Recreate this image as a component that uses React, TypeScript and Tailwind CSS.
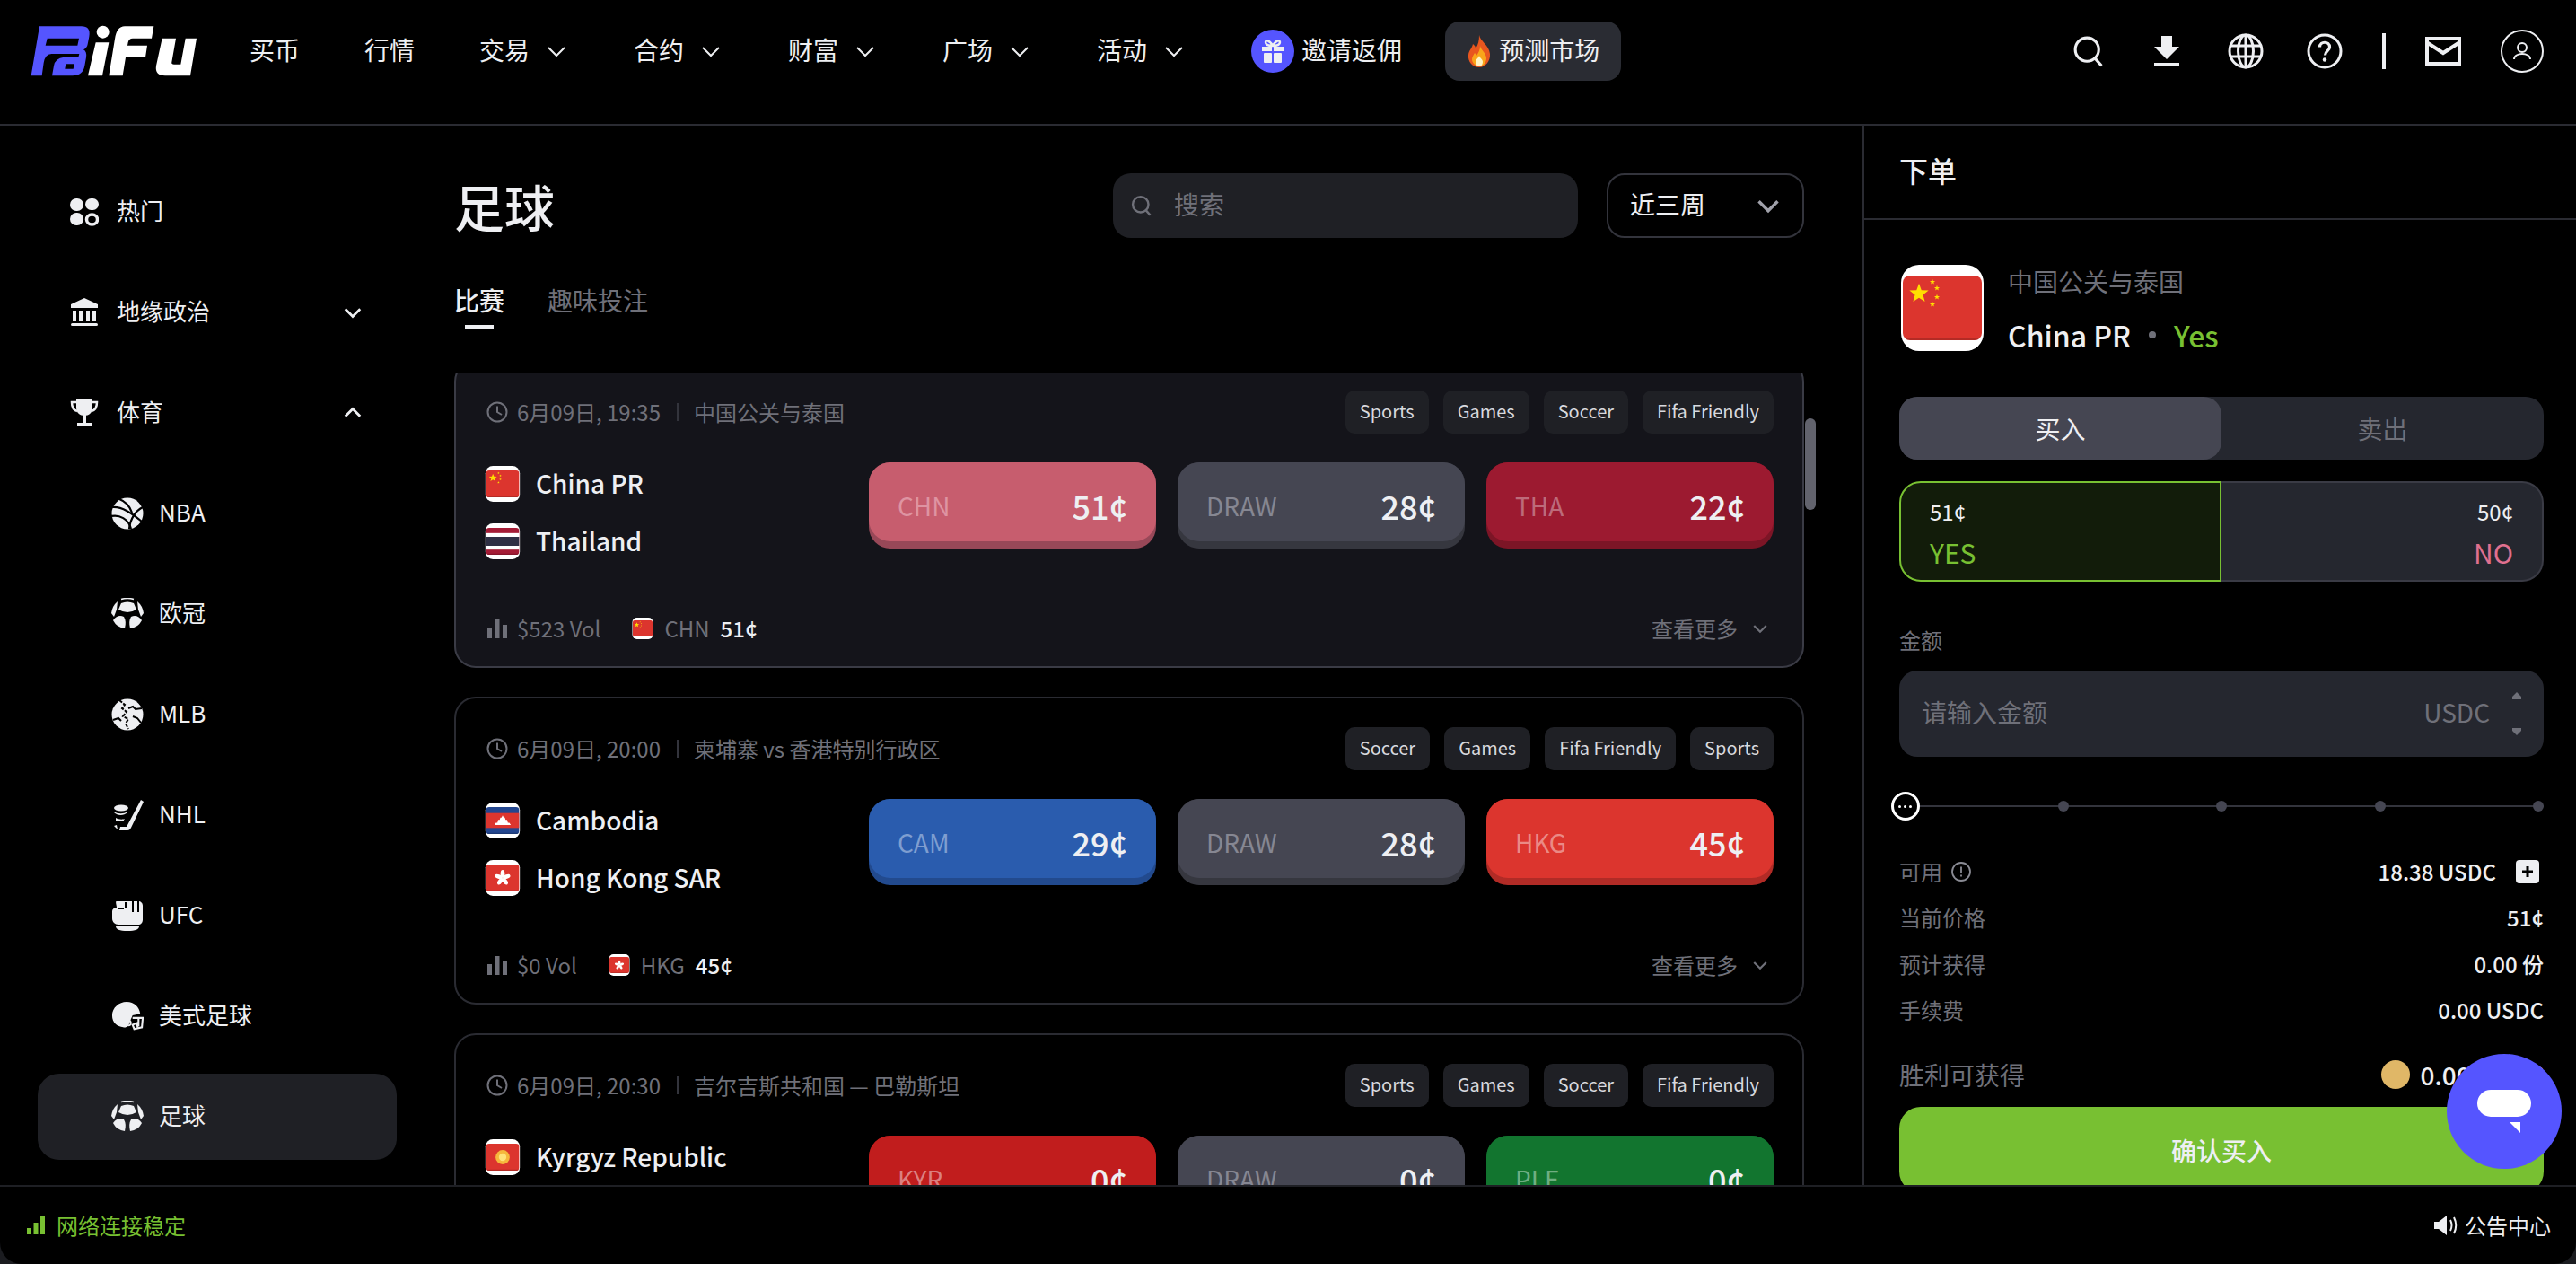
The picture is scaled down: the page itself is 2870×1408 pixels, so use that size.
import React from "react"

const INK = "#eeeff2"

type FlagCode = "cn" | "th" | "kh" | "hk" | "kg" | "pk"

function Star({ x, y, r, fill = "#ffde00" }: { x: number; y: number; r: number; fill?: string }) {
  const pts = []
  for (let i = 0; i < 10; i++) {
    const a = -Math.PI / 2 + (i * Math.PI) / 5
    const rad = i % 2 === 0 ? r : r * 0.42
    pts.push(`${x + rad * Math.cos(a)},${y + rad * Math.sin(a)}`)
  }
  return <polygon points={pts.join(" ")} fill={fill} />
}

function FlagBody({ code }: { code: FlagCode }) {
  if (code === "cn")
    return (
      <>
        <rect x="0" y="6" width="48" height="36" fill="#dc352e" />
        <Star x={11} y={16} r={5.6} />
        <Star x={18.5} y={9.5} r={1.6} />
        <Star x={21} y={13} r={1.6} />
        <Star x={21} y={18} r={1.6} />
        <Star x={18.5} y={22} r={1.6} />
      </>
    )
  if (code === "th")
    return (
      <>
        <rect x="0" y="6" width="48" height="36" fill="#a51c36" />
        <rect x="0" y="13" width="48" height="22" fill="#ffffff" />
        <rect x="0" y="18" width="48" height="12" fill="#2f3044" />
      </>
    )
  if (code === "kh")
    return (
      <>
        <rect x="0" y="6" width="48" height="36" fill="#23468f" />
        <rect x="0" y="14" width="48" height="20" fill="#dc352e" />
        <path d="M13 30h22l-2-3h-2l-1-4h-2l-1-3h-1.5L24 17l-1.500 3H21l-1 3h-2l-1 4h-2z" fill="#fff" />
      </>
    )
  if (code === "hk")
    return (
      <>
        <rect x="0" y="6" width="48" height="36" fill="#dc352e" />
        {[0, 72, 144, 216, 288].map((a) => (
          <ellipse key={a} cx="24" cy="18.500" rx="2.800" ry="5.200" fill="#fff" transform={`rotate(${a} 24 24)`} />
        ))}
      </>
    )
  if (code === "kg")
    return (
      <>
        <rect x="0" y="6" width="48" height="36" fill="#dc352e" />
        <circle cx="24" cy="24" r="9.500" fill="#f6b73c" />
        <circle cx="24" cy="24" r="5" fill="#ffe27a" />
      </>
    )
  return (
    <>
      <rect x="0" y="6" width="48" height="36" fill="#0f6b34" />
    </>
  )
}

function Flag({ code, size, id }: { code: FlagCode; size: number; id: string }) {
  return (
    <svg width={size} height={size} viewBox="0 0 48 48" className="shrink-0">
      <defs>
        <clipPath id={id}>
          <rect x="2" y="6" width="44" height="36" rx="4" />
        </clipPath>
      </defs>
      <rect x="1" y="0" width="46" height="48" rx="10" fill="#fff" />
      <g clipPath={`url(#${id})`}>
        <FlagBody code={code} />
        <rect x="0" y="40.500" width="48" height="2" fill="#000" opacity="0.18" />
      </g>
    </svg>
  )
}

function Chev({ w = 24, up = false, color = INK, sw = 2 }: { w?: number; up?: boolean; color?: string; sw?: number }) {
  return (
    <svg width={w} height={w} viewBox="0 0 24 24" fill="none" stroke={color} strokeWidth={sw} className="shrink-0">
      <polyline points={up ? "3,16 12,7 21,16" : "3,8 12,17 21,8"} />
    </svg>
  )
}

function Logo() {
  return (
    <svg width="210" height="75" viewBox="0 0 630 225" className="shrink-0">
      <path
        fillRule="evenodd"
        fill="#5555ff"
        d="M60 28H200Q232 28 226 62L221 88Q219 100 207 106Q219 112 216 132L211 160Q205 193 170 193H102L108 160Q112 134 142 131H190L193 120H100Q78 122 74 150L68 193H32ZM86 68H192L187 92H80Z"
      />
      <path fill="#000" d="M148 154H176L173 170H145Z" />
      <circle cx="272" cy="47" r="21" fill="#fff" />
      <path fill="#fff" d="M248 82H292L270 193H222Z" />
      <path fill="#fff" d="M345 28H442L435 68H372Q358 68 356 82L354 92H420L414 132H348L338 193H292L312 70Q318 28 345 28Z" />
      <path fill="#fff" d="M470 68H516L502 148Q500 155 510 155H532L548 68H585L564 193H480Q445 193 450 160Z" />
    </svg>
  )
}

function SearchIcon({ size = 36, color = INK, sw = 3.500 }: { size?: number; color?: string; sw?: number }) {
  return (
    <svg width={size} height={size} viewBox="0 0 40 40" fill="none" stroke={color} strokeWidth={sw} className="shrink-0">
      <circle cx="18" cy="18" r="14.500" />
      <line x1="28" y1="29" x2="36" y2="38" />
    </svg>
  )
}

function TopIcons() {
  return (
    <div className="flex items-center">
      <SearchIcon />
      <svg width="28" height="34" viewBox="0 0 28 34" fill={INK} className="ml-[55px]">
        <path d="M8 0h12v12h8L14 26 0 12h8z" />
        <rect x="0" y="30" width="28" height="4" />
      </svg>
      <svg width="40" height="40" viewBox="0 0 40 40" fill="none" stroke={INK} strokeWidth="3" className="ml-[54px]">
        <circle cx="20" cy="20" r="18" />
        <ellipse cx="20" cy="20" rx="8.500" ry="18" />
        <line x1="20" y1="2" x2="20" y2="38" />
        <line x1="3" y1="14" x2="37" y2="14" />
        <line x1="3" y1="26" x2="37" y2="26" />
      </svg>
      <svg width="40" height="40" viewBox="0 0 40 40" fill="none" stroke={INK} strokeWidth="3" className="ml-[48px]">
        <circle cx="20" cy="20" r="18" />
        <path d="M14.500 15.500c0-7 11-7 11 0 0 4-5 4.500-5 9" strokeWidth="3.200" />
        <circle cx="20" cy="29.500" r="2.200" fill={INK} stroke="none" />
      </svg>
      <div className="ml-[44px] h-10 w-1 bg-[#eeeff2]" />
      <svg width="40" height="32" viewBox="0 0 40 32" fill="none" stroke={INK} strokeWidth="4" className="ml-[44px]">
        <rect x="2" y="2" width="36" height="28" />
        <polyline points="3,7 20,18 37,7" />
      </svg>
      <svg width="48" height="48" viewBox="0 0 48 48" fill="none" stroke={INK} strokeWidth="2" className="ml-[44px]">
        <circle cx="24" cy="24" r="23" />
        <circle cx="24" cy="20" r="5" />
        <path d="M15 33c0-8 18-8 18 0" />
      </svg>
    </div>
  )
}

function GiftBadge() {
  return (
    <div className="flex h-12 w-12 shrink-0 items-center justify-center rounded-full bg-[#5555ff]">
      <svg width="28" height="28" viewBox="0 0 28 28" fill={INK}>
        <path d="M14 8C11 2 6 1 6 4c0 3 4 4 8 4zM14 8c3-6 8-7 8-4 0 3-4 4-8 4z" fill="none" stroke={INK} strokeWidth="2.500" />
        <rect x="2" y="9" width="11" height="5" />
        <rect x="15" y="9" width="11" height="5" />
        <rect x="4" y="16" width="9" height="11" rx="1" />
        <rect x="15" y="16" width="9" height="11" rx="1" />
      </svg>
    </div>
  )
}

function Flame() {
  return (
    <svg width="28" height="36" viewBox="0 0 28 36" className="shrink-0">
      <path d="M14 0c1 7 11 11 12 21 .6 8-5 15-12 15S1 30 2 22c.6-5 4-7 5-12 2 1.500 3 3 3 5 3-4 4-9 4-15z" fill="#e8561f" />
      <path d="M15 12c1 5 7 8 7 14 0 5-4 9-8 9s-8-4-8-8c0-3 2-5 3-7 1 1 1.500 2 2 3 2-3 4-6 4-11z" fill="#f9a51a" />
      <path d="M14 23c1 3 4 4 4 7s-2 5-4 5-4-2-4-5 3-4 4-7z" fill="#fff3c4" />
    </svg>
  )
}

function TopBar() {
  const nav: [string, boolean][] = [
    ["买币", false],
    ["行情", false],
    ["交易", true],
    ["合约", true],
    ["财富", true],
    ["广场", true],
    ["活动", true],
  ]
  return (
    <header className="flex h-[140px] shrink-0 items-start border-b-2 border-[#2a2b32] pl-6 pr-9 pt-6">
      <div className="flex h-[66px] w-full items-center text-[28px] text-[#eeeff2]">
        <Logo />
        <nav className="ml-[44px] flex items-center gap-[72px]">
          {nav.map(([label, more]) => (
            <div key={label} className="flex items-center gap-[18px]">
              <span className="pb-1">{label}</span>
              {more && (
                <span className="mr-0.5">
                  <Chev />
                </span>
              )}
            </div>
          ))}
        </nav>
        <div className="ml-[72px] flex items-center gap-2">
          <GiftBadge />
          <span className="pb-1">邀请返佣</span>
        </div>
        <div className="ml-[48px] flex h-[66px] items-center gap-2 rounded-[16px] bg-[#2a2c33] px-6">
          <Flame />
          <span className="pb-1">预测市场</span>
        </div>
        <div className="ml-auto">
          <TopIcons />
        </div>
      </div>
    </header>
  )
}

function GridIcon() {
  return (
    <svg width="32" height="32" viewBox="0 0 32 32" fill={INK}>
      <rect x="0" y="1" width="15" height="14" rx="7" />
      <rect x="17" y="1" width="15" height="13" rx="6.500" />
      <rect x="0" y="17" width="15" height="14" rx="7" />
      <ellipse cx="24.500" cy="24.500" rx="6" ry="5.500" fill="none" stroke={INK} strokeWidth="3.500" />
    </svg>
  )
}

function BankIcon() {
  return (
    <svg width="32" height="32" viewBox="0 0 32 32" fill={INK}>
      <path d="M16 0 31 7v4H1V7z" />
      <rect x="3" y="14" width="4" height="12" />
      <rect x="10" y="14" width="4" height="12" />
      <rect x="18" y="14" width="4" height="12" />
      <rect x="25" y="14" width="4" height="12" />
      <rect x="1" y="28" width="30" height="3" rx="1.500" />
    </svg>
  )
}

function TrophyIcon() {
  return (
    <svg width="32" height="32" viewBox="0 0 32 32" fill={INK}>
      <path d="M7 1h18v9c0 6-4 9-9 9s-9-3-9-9z" />
      <path d="M7 4H2c0 6 2 9 6 10M25 4h5c0 6-2 9-6 10" fill="none" stroke={INK} strokeWidth="2.500" />
      <rect x="14" y="18" width="4" height="9" />
      <rect x="8" y="27" width="16" height="4" />
    </svg>
  )
}

function BallIcon() {
  return (
    <svg width="36" height="36" viewBox="0 0 36 36">
      <circle cx="18" cy="18" r="17.500" fill={INK} />
      <g fill="none" stroke="#000" strokeWidth="2.200">
        <path d="M1 11c11-1 22 7 33 16" />
        <path d="M0 21c9-2 19 3 22 14" />
        <path d="M9 2c8 3 12 9 14 15" />
        <path d="M35 11C27 15 21 24 20 35" />
      </g>
    </svg>
  )
}

function SoccerIcon() {
  return (
    <svg width="36" height="36" viewBox="0 0 36 36" fill={INK}>
      <path d="M11 1.500Q18-.5 25 1.500" fill="none" stroke={INK} strokeWidth="1.500" />
      <path d="M11 6Q18 3 25 6L28 13Q18 19 8 13Z" />
      <path d="M7 4Q1 9 0 17L3 21 6 13Z" />
      <path d="M29 4Q35 9 36 17L33 21 30 13Z" />
      <path d="M2 25Q7 18 14 21 17 26 15 34 6 33 2 25Z" />
      <path d="M34 25Q29 18 22 21 19 26 21 34 30 33 34 25Z" />
    </svg>
  )
}

function BaseballIcon() {
  return (
    <svg width="36" height="36" viewBox="0 0 36 36">
      <circle cx="18" cy="18" r="17.500" fill={INK} />
      <g fill="none" stroke="#000" strokeWidth="2">
        <path d="M9 2 15 7l-3 4 5 4-4 5 6 3-3 5 3 6" strokeDasharray="4 1.500" />
        <path d="M2 24l6-2 3 3M34 11l-7 1-3-3-5 2" />
        <path d="M24 20l5 2 4 5" />
      </g>
    </svg>
  )
}

function HockeyIcon() {
  return (
    <svg width="36" height="36" viewBox="0 0 36 36" fill={INK}>
      <path d="M33 1 36 3 22 32c-1 2-2 3-4 3H9l1-4h7z" />
      <ellipse cx="11" cy="10" rx="8" ry="3.500" />
      <path d="M3 14c4 3 11 3 15 0v1c-4 4-11 4-15 0z" />
      <path d="M5 21c3 2 8 2 10 1l-2 3c-3 0-6 0-8-1z" />
      <path d="M3 30l3-1 1 5z" />
    </svg>
  )
}

function GloveIcon() {
  return (
    <svg width="36" height="36" viewBox="0 0 36 36" fill={INK}>
      <path d="M6 2h24c3 0 5 2 5 5v15c0 4-2 6-5 6H8c-4 0-7-3-7-7v-8c0-2 2-4 5-4 0-3-2-7 0-7z" />
      <path d="M5 30h26c0 3-4 5-13 5S5 33 5 30z" />
      <g stroke="#000" strokeWidth="2">
        <line x1="16" y1="3" x2="16" y2="9" />
        <line x1="24" y1="2" x2="24" y2="14" />
        <line x1="30" y1="2" x2="30" y2="14" />
        <line x1="7" y1="10" x2="14" y2="10" />
      </g>
    </svg>
  )
}

function HelmetIcon() {
  return (
    <svg width="38" height="36" viewBox="0 0 38 36" fill={INK}>
      <path d="M18 1c9 0 15 6 16 14l-9 2-3 7c-1 5-4 8-8 7-7-1-13-5-13-14C1 8 9 1 18 1z" />
      <circle cx="20" cy="26" r="3" fill="none" stroke={INK} strokeWidth="2" />
      <path d="M25 20h12l-1 11-9 2-2-5 5-2 1 5M32 20v10" fill="none" stroke={INK} strokeWidth="2.200" />
    </svg>
  )
}

function Sidebar() {
  const row = "flex h-24 w-[400px] shrink-0 items-center rounded-[24px]"
  const top: [React.ReactNode, string, boolean | null][] = [
    [<GridIcon key="g" />, "热门", null],
    [<BankIcon key="b" />, "地缘政治", false],
    [<TrophyIcon key="t" />, "体育", true],
  ]
  const sub: [React.ReactNode, string][] = [
    [<BallIcon key="n" />, "NBA"],
    [<SoccerIcon key="u" />, "欧冠"],
    [<BaseballIcon key="m" />, "MLB"],
    [<HockeyIcon key="h" />, "NHL"],
    [<GloveIcon key="f" />, "UFC"],
    [<HelmetIcon key="a" />, "美式足球"],
  ]
  return (
    <aside className="flex w-[506px] shrink-0 flex-col gap-4 overflow-hidden pl-[42px] pt-[48px] text-[26px] text-[#eeeff2]">
      {top.map(([icon, label, open]) => (
        <div key={label} className={`${row} pl-9 pr-[38px]`}>
          {icon}
          <span className="ml-5 pb-[5px]">{label}</span>
          {open !== null && (
            <span className="ml-auto">
              <Chev w={22} up={open} sw={3} />
            </span>
          )}
        </div>
      ))}
      {sub.map(([icon, label]) => (
        <div key={label} className={`${row} pl-[82px]`}>
          <span className="flex w-9 justify-center">{icon}</span>
          <span className="ml-[17px] pb-[5px]">{label}</span>
        </div>
      ))}
      <div className={`${row} bg-[#1f2025] pl-[82px]`}>
        <span className="flex w-9 justify-center">
          <SoccerIcon />
        </span>
        <span className="ml-[17px] pb-[5px]">足球</span>
      </div>
    </aside>
  )
}

type Outcome = { label: string; price: string; face: string; base: string; tone: string }

type Game = {
  time: string
  title: string
  tags: string[]
  teams: [FlagCode, string][]
  outcomes: Outcome[]
  vol: string
  pick: [FlagCode, string, string]
  active?: boolean
}

const draw = (price: string): Outcome => ({
  label: "DRAW",
  price,
  face: "bg-[#454652]",
  base: "bg-[#36373f]",
  tone: "text-[#868792]",
})

const games: Game[] = [
  {
    time: "6月09日, 19:35",
    title: "中国公关与泰国",
    tags: ["Sports", "Games", "Soccer", "Fifa Friendly"],
    teams: [
      ["cn", "China PR"],
      ["th", "Thailand"],
    ],
    outcomes: [
      { label: "CHN", price: "51¢", face: "bg-[#c75d6e]", base: "bg-[#984858]", tone: "text-[#de94a2]" },
      draw("28¢"),
      { label: "THA", price: "22¢", face: "bg-[#9c1a30]", base: "bg-[#7c1526]", tone: "text-[#bd6b7a]" },
    ],
    vol: "$523 Vol",
    pick: ["cn", "CHN", "51¢"],
    active: true,
  },
  {
    time: "6月09日, 20:00",
    title: "柬埔寨 vs 香港特别行政区",
    tags: ["Soccer", "Games", "Fifa Friendly", "Sports"],
    teams: [
      ["kh", "Cambodia"],
      ["hk", "Hong Kong SAR"],
    ],
    outcomes: [
      { label: "CAM", price: "29¢", face: "bg-[#2a5cae]", base: "bg-[#224a8e]", tone: "text-[#7f9ed0]" },
      draw("28¢"),
      { label: "HKG", price: "45¢", face: "bg-[#dc352e]", base: "bg-[#b12b26]", tone: "text-[#ea8a85]" },
    ],
    vol: "$0 Vol",
    pick: ["hk", "HKG", "45¢"],
  },
  {
    time: "6月09日, 20:30",
    title: "吉尔吉斯共和国 — 巴勒斯坦",
    tags: ["Sports", "Games", "Soccer", "Fifa Friendly"],
    teams: [
      ["kg", "Kyrgyz Republic"],
      ["pk", "Palestine"],
    ],
    outcomes: [
      { label: "KYR", price: "0¢", face: "bg-[#c11d1d]", base: "bg-[#9a1717]", tone: "text-[#db8080]" },
      draw("0¢"),
      { label: "PLE", price: "0¢", face: "bg-[#12752f]", base: "bg-[#0e5e26]", tone: "text-[#6fae82]" },
    ],
    vol: "$0 Vol",
    pick: ["kg", "KYR", "0¢"],
  },
]

function OutcomeButton({ o }: { o: Outcome }) {
  return (
    <div className={`h-24 w-80 rounded-[24px] pb-2 ${o.base}`}>
      <div className={`flex h-full items-center justify-between rounded-[24px] px-8 pt-2 ${o.face}`}>
        <span className={`text-[28px] ${o.tone}`}>{o.label}</span>
        <span className="text-[36px] font-medium text-[#eeeff2]">{o.price}</span>
      </div>
    </div>
  )
}

function ClockIcon() {
  return (
    <svg width="24" height="24" viewBox="0 0 24 24" fill="none" stroke="#6f7079" strokeWidth="2" className="shrink-0">
      <circle cx="12" cy="12" r="10.500" />
      <polyline points="12,5.500 12,12 17,15" />
    </svg>
  )
}

function GameCard({ g, idx }: { g: Game; idx: number }) {
  return (
    <div
      className={`flex h-[343px] w-[1504px] shrink-0 flex-col rounded-[24px] border-2 px-8 pb-[22px] pt-8 ${
        g.active ? "border-[#3a3b45] bg-[#14141a]" : "border-[#2a2b32] bg-black"
      }`}
    >
      <div className="flex h-12 items-center justify-between">
        <div className="flex items-center text-[24px] text-[#6f7079]">
          <span className="ml-0.5">
            <ClockIcon />
          </span>
          <span className="ml-[10px]">{g.time}</span>
          <span className="ml-[18px] mr-[17px] h-5 w-0.5 bg-[#33343c]" />
          <span>{g.title}</span>
        </div>
        <div className="flex gap-4">
          {g.tags.map((t) => (
            <span key={t} className="flex h-12 items-center rounded-[10px] bg-[#1f2025] px-4 pb-0.5 text-[20px] text-[#d8d9de]">
              {t}
            </span>
          ))}
        </div>
      </div>
      <div className="mt-8 flex">
        <div className="flex w-[428px] shrink-0 flex-col gap-6 pt-1">
          {g.teams.map(([code, name], i) => (
            <div key={name} className="flex h-10 items-center gap-[17px] text-[28px] font-medium text-[#eeeff2]">
              <Flag code={code} size={40} id={`t${idx}${i}`} />
              <span className="pb-0.5">{name}</span>
            </div>
          ))}
        </div>
        <div className="flex gap-6">
          {g.outcomes.map((o) => (
            <OutcomeButton key={o.label} o={o} />
          ))}
        </div>
      </div>
      <div className="mt-auto flex h-10 items-center justify-between text-[24px]">
        <div className="flex items-center text-[#6f7079]">
          <svg width="24" height="24" viewBox="0 0 24 24" fill="#6f7079" className="ml-0.5 shrink-0">
            <rect x="1" y="11" width="5" height="12" />
            <rect x="9.500" y="2" width="5" height="21" />
            <rect x="18" y="8" width="5" height="15" />
          </svg>
          <span className="ml-[10px]">{g.vol}</span>
          <span className="ml-[35px]">
            <Flag code={g.pick[0]} size={24} id={`p${idx}`} />
          </span>
          <span className="ml-[12px]">{g.pick[1]}</span>
          <span className="ml-[12px] font-medium text-[#eeeff2]">{g.pick[2]}</span>
        </div>
        <div className="mr-1.5 flex items-center gap-4 text-[#6f7079]">
          <span>查看更多</span>
          <Chev w={18} color="#6f7079" sw={3} />
        </div>
      </div>
    </div>
  )
}

function MainColumn() {
  return (
    <main className="flex w-[1569px] shrink-0 flex-col overflow-hidden">
      <div className="flex w-[1504px] shrink-0 items-center justify-between pt-[53px]">
        <h1 className="text-[56px] font-medium leading-[72px] text-[#eeeff2]">足球</h1>
        <div className="flex gap-8">
          <div className="flex h-[72px] w-[518px] items-center gap-6 rounded-[20px] bg-[#1f2025] pl-5 text-[28px] text-[#6f7079]">
            <SearchIcon size={24} color="#6f7079" sw={4} />
            <span className="pb-1">搜索</span>
          </div>
          <div className="flex h-[72px] w-[220px] items-center justify-between rounded-[20px] border-2 border-[#33343c] pl-6 pr-6 text-[28px] text-[#eeeff2]">
            <span className="pb-1">近三周</span>
            <Chev w={28} color="#a0a1aa" sw={3} />
          </div>
        </div>
      </div>
      <div className="mt-[49px] flex shrink-0 items-start gap-[48px] text-[28px] font-medium">
        <div className="flex flex-col items-center">
          <span className="leading-10 text-[#eeeff2]">比赛</span>
          <span className="mt-2 h-1 w-8 bg-[#eeeff2]" />
        </div>
        <span className="leading-10 font-normal text-[#6f7079]">趣味投注</span>
      </div>
      <div className="relative mt-[50px] min-h-0 flex-1 overflow-hidden">
        <div className="-mt-[15px] flex flex-col gap-8">
          {games.map((g, i) => (
            <GameCard key={g.time} g={g} idx={i} />
          ))}
        </div>
        <div className="absolute left-[1505px] top-[50px] h-[102px] w-3 rounded-full bg-[#62636d]" />
      </div>
    </main>
  )
}

function InfoRow({ label, value, children }: { label: React.ReactNode; value: string; children?: React.ReactNode }) {
  return (
    <div className="flex h-[51.5px] items-center justify-between text-[24px]">
      <div className="flex items-center gap-[10px] pb-0.5 text-[#6f7079]">{label}</div>
      <div className="flex items-center pb-0.5 font-medium text-[#eeeff2]">
        <span>{value}</span>
        {children}
      </div>
    </div>
  )
}

function Slider() {
  return (
    <div className="relative -ml-[9px] mt-[39px] flex h-8 items-center gap-[164.5px]">
      <div className="absolute left-[9px] right-0 top-[15px] h-0.5 bg-[#33343c]" />
      <div className="relative flex h-8 w-8 items-center justify-center gap-[3px] rounded-full border-[3px] border-white bg-black">
        <span className="h-[3px] w-[3px] rounded-full bg-white" />
        <span className="h-[3px] w-[3px] rounded-full bg-white" />
        <span className="h-[3px] w-[3px] rounded-full bg-white" />
      </div>
      <span className="relative -ml-[10.500px] h-3 w-3 rounded-full bg-[#454652]" />
      <span className="relative h-3 w-3 rounded-full bg-[#454652]" />
      <span className="relative h-3 w-3 rounded-full bg-[#454652]" />
      <span className="relative h-3 w-3 rounded-full bg-[#454652]" />
    </div>
  )
}

function OrderPanel() {
  return (
    <section className="flex w-[795px] shrink-0 flex-col border-l-2 border-[#2a2b32]">
      <div className="flex h-[105px] shrink-0 items-center border-b-2 border-[#2a2b32] pb-[6px] pl-[39px] text-[32px] font-medium text-[#eeeff2]">
        下单
      </div>
      <div className="min-h-0 flex-1 overflow-hidden pl-[39px] pr-9">
        <div className="mt-[50px] flex items-center gap-[25px]">
          <Flag code="cn" size={96} id="order" />
          <div className="flex flex-col">
            <span className="text-[28px] leading-9 text-[#6f7079]">中国公关与泰国</span>
            <span className="mt-[24px] flex items-center text-[32px] font-medium leading-[36px] text-[#eeeff2]">
              China PR
              <span className="mx-5 h-2 w-2 rounded-full bg-[#6f7079]" />
              <span className="text-[#78c032]">Yes</span>
            </span>
          </div>
        </div>
        <div className="mt-[51px] flex h-[70px] rounded-[20px] bg-[#25272f] text-[28px]">
          <div className="flex w-[359px] items-center justify-center rounded-[20px] bg-[#454652] text-[#eeeff2]">买入</div>
          <div className="flex flex-1 items-center justify-center text-[#6f7079]">卖出</div>
        </div>
        <div className="mt-6 flex h-28">
          <div className="flex w-[359px] flex-col rounded-l-[24px] border-2 border-[#78c032] bg-[#121c0a] pl-8 pt-[14px]">
            <span className="text-[24px] leading-9 text-[#eeeff2]">51¢</span>
            <span className="mt-[9px] text-[30px] leading-9 text-[#78c032]">YES</span>
          </div>
          <div className="flex flex-1 flex-col items-end rounded-r-[24px] border-y-2 border-r-2 border-[#3a3b45] bg-[#25272f] pr-8 pt-[14px]">
            <span className="text-[24px] leading-9 text-[#eeeff2]">50¢</span>
            <span className="mt-[9px] text-[30px] leading-9 text-[#e0708f]">NO</span>
          </div>
        </div>
        <div className="mt-[49px] text-[24px] leading-8 text-[#6f7079]">金额</div>
        <div className="mt-[18px] flex h-24 items-center rounded-[20px] bg-[#25272f] pl-[25px] pr-6 text-[28px] text-[#6f7079]">
          <span className="pb-1">请输入金额</span>
          <span className="ml-auto pb-1">USDC</span>
          <svg width="12" height="50" viewBox="0 0 12 50" fill="#6f7079" className="ml-6 shrink-0">
            <path d="M6 1 11 6v3H1V6zM1 41h10v3l-5 5-5-5z" />
          </svg>
        </div>
        <Slider />
        <div className="mt-8">
          <InfoRow
            label={
              <>
                <span>可用</span>
                <svg width="22" height="22" viewBox="0 0 22 22" fill="none" stroke="#8a8b94" strokeWidth="1.800">
                  <circle cx="11" cy="11" r="10" />
                  <line x1="11" y1="5.500" x2="11" y2="12.500" />
                  <line x1="11" y1="14.500" x2="11" y2="16.500" />
                </svg>
              </>
            }
            value="18.38 USDC"
          >
            <span className="ml-[22px] mr-[5px] flex h-[26px] w-[26px] items-center justify-center rounded-[4px] bg-[#eeeff2]">
              <svg width="14" height="14" viewBox="0 0 14 14" stroke="#000" strokeWidth="3">
                <line x1="7" y1="1" x2="7" y2="13" />
                <line x1="1" y1="7" x2="13" y2="7" />
              </svg>
            </span>
          </InfoRow>
          <InfoRow label="当前价格" value="51¢" />
          <InfoRow label="预计获得" value="0.00 份" />
          <InfoRow label="手续费" value="0.00 USDC" />
        </div>
        <div className="mt-[27px] flex h-10 items-center justify-between">
          <span className="pb-1 text-[28px] text-[#6f7079]">胜利可获得</span>
          <span className="flex items-center gap-3 pb-1 text-[28px] font-medium text-[#eeeff2]">
            <span className="h-8 w-8 rounded-full bg-[#e0b767]" />
            0.00 USDC
          </span>
        </div>
        <div className="mt-[14px] flex h-24 items-center justify-center rounded-[24px] bg-[#78c032] text-[28px] font-medium text-[#eeeff2]">
          确认买入
        </div>
      </div>
    </section>
  )
}

function StatusBar() {
  return (
    <footer className="flex h-[88px] shrink-0 items-center justify-between border-t-2 border-[#1e1f24] pl-[30px] pr-7 text-[24px]">
      <div className="flex items-center gap-[13px] text-[#78c032]">
        <svg width="20" height="20" viewBox="0 0 20 20" fill="#78c032">
          <rect x="0" y="13" width="5" height="7" />
          <rect x="7.500" y="7" width="5" height="13" />
          <rect x="15" y="0" width="5" height="20" />
        </svg>
        <span>网络连接稳定</span>
      </div>
      <div className="flex items-center gap-2 text-[#eeeff2]">
        <svg width="26" height="24" viewBox="0 0 26 24" fill={INK}>
          <path d="M0 8h5l9-7v22l-9-7H0z" />
          <path d="M18 6c2 4 2 8 0 12M22 3c3 6 3 12 0 18" fill="none" stroke={INK} strokeWidth="2" />
        </svg>
        <span>公告中心</span>
      </div>
    </footer>
  )
}

function ChatBubble() {
  return (
    <div className="absolute bottom-[106px] right-4 flex h-32 w-32 flex-col items-center justify-center rounded-full bg-[#5555ff]">
      <div className="h-[30px] w-[60px] rounded-full bg-white" />
      <svg width="12" height="12" viewBox="0 0 12 12" fill="#fff" className="ml-[24px] mt-[6px]">
        <path d="M0 0h12v12z" />
      </svg>
    </div>
  )
}

export default function App() {
  return (
    <div className="relative h-[1408px] w-[2870px] overflow-hidden bg-[#1b1c20] font-['Noto_Sans_CJK_SC','Noto_Sans',sans-serif]">
      <div className="flex h-full flex-col rounded-b-[24px] bg-black">
        <TopBar />
        <div className="flex min-h-0 flex-1">
          <Sidebar />
          <MainColumn />
          <OrderPanel />
        </div>
        <StatusBar />
      </div>
      <ChatBubble />
    </div>
  )
}
